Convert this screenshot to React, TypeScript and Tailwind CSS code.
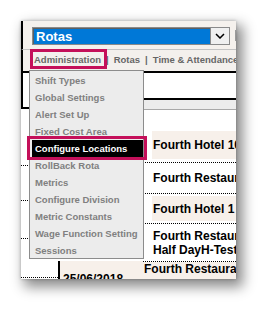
const menuItems = [
  "Shift Types",
  "Global Settings",
  "Alert Set Up",
  "Fixed Cost Area",
  "Configure Locations",
  "RollBack Rota",
  "Metrics",
  "Configure Division",
  "Metric Constants",
  "Wage Function Setting",
  "Sessions",
];

export default function App() {
  return (
    <div className="w-[278px] h-[321px] bg-white pt-[21px] pl-[21px] font-['Liberation_Sans',Arial,sans-serif]">
      <div className="relative w-[215px] h-[258px] overflow-hidden bg-white shadow-[5px_6px_12px_2px_rgba(0,0,0,0.45),0_0_3px_rgba(0,0,0,0.25)]">
        {/* top bar with module select */}
        <div className="flex items-start h-[29px] pt-[6px] pl-[9px] bg-[#f5f1ed] border-l-2 border-l-black border-b border-b-[#c4c4c4]">
          <div className="flex h-[18px] w-[198px] shrink-0 border border-[#8a8a8a] bg-white">
            <div className="flex-1 bg-[#0078d7] border-t border-l border-[#5f5f5f] pl-[2px] text-[13px] leading-[15px] font-bold text-white">
              Rotas
            </div>
            <div className="w-[19px] flex items-center justify-center bg-[#f0f0f0] border-l border-[#8a8a8a]">
              <svg width="10" height="6" viewBox="0 0 10 6">
                <path d="M1 1l4 4 4-4" fill="none" stroke="#000" strokeWidth="1.5" />
              </svg>
            </div>
          </div>
          <div className="ml-[5px] mt-[3px] w-[6px] h-[11px] shrink-0 bg-[#9a9a9a]" />
        </div>

        {/* nav */}
        <div className="flex items-center h-[21px] pl-[11px] bg-[#f3f0ed] border-l-2 border-black whitespace-nowrap text-[9.5px] font-bold text-[#666]">
          <span>Administration</span>
          <span className="mx-[5px]">|</span>
          <span>Rotas</span>
          <span className="mx-[5px]">|</span>
          <span>Time &amp; Attendance</span>
        </div>

        {/* table underneath */}
        <div className="flex">
          <div className="w-[122px] shrink-0 flex flex-col">
            <div className="h-[38px] border-t-2 border-b-2 border-l-2 border-black bg-white" />
            <div className="h-[152px] flex flex-col w-[37px]">
              <div className="h-[57px] border-b border-dotted border-black" />
              <div className="h-[35px] border-b border-dotted border-black" />
              <div className="h-[38px] border-b border-dotted border-black" />
            </div>
            <div className="flex h-[40px]">
              <div className="w-[37px] h-[17px] border-b border-dotted border-black" />
              <div className="flex-1 border-l-2 border-black bg-[#f7f0ea] pl-[3px] pt-[11px] text-[12px] leading-[14px] font-bold text-black">
                25/06/2018
              </div>
            </div>
          </div>

          <div className="w-[93px] shrink-0 flex flex-col text-[12px] leading-[14px] font-bold text-black whitespace-nowrap">
            <div className="h-[29px] border-t-2 border-b-2 border-black bg-white" />
            <div className="h-[10px] bg-[#ececec] border-b border-[#a8a8a8]" />
            <div className="flex h-[53px] pt-[21px] pb-[3px] border-b border-dotted border-black">
              <div className="ml-[9px] flex-1 flex items-center pl-[1px] bg-[#f7f0ea]">Fourth Hotel 10</div>
            </div>
            <div className="flex items-center h-[31px] pl-[10px] border-b border-dotted border-black">
              Fourth Restaurant
            </div>
            <div className="flex h-[30px] py-[2px] border-b border-dotted border-black">
              <div className="ml-[9px] flex-1 flex items-center pl-[1px] bg-[#f7f0ea]">Fourth Hotel 1</div>
            </div>
            <div className="flex flex-col justify-center h-[38px] pl-[10px] border-b border-dotted border-black">
              <span>Fourth Restaurant</span>
              <span>Half DayH-Test</span>
            </div>
            <div className="flex h-[20px]">
              <div className="w-[5px] bg-[#f7f0ea]" />
              <div className="w-[4px]" />
              <div className="flex-1 pl-[1px] bg-[#f7f0ea]">Fourth Restaurant</div>
            </div>
          </div>
        </div>

        {/* Administration dropdown */}
        <div className="absolute left-[8px] top-[49px] w-[115px] h-[189px] pt-[1px] bg-[#ececec] border border-[#8c8c8c]">
          {menuItems.map((item) => (
            <div
              key={item}
              className={
                item === "Configure Locations"
                  ? "ml-[2px] h-[17px] pl-[3px] leading-[17px] text-[9.5px] font-bold whitespace-nowrap bg-black text-white"
                  : "ml-[2px] h-[17px] pl-[3px] leading-[17px] text-[9.5px] font-bold whitespace-nowrap text-[#808080]"
              }
            >
              {item}
            </div>
          ))}
        </div>

        {/* annotation boxes */}
        <div className="absolute left-[9px] top-[28px] w-[77px] h-[20px] border-[3px] border-[#c4105a]" />
        <div className="absolute left-[6px] top-[115px] w-[120px] h-[24px] border-[3px] border-[#c4105a]" />
      </div>
    </div>
  );
}
